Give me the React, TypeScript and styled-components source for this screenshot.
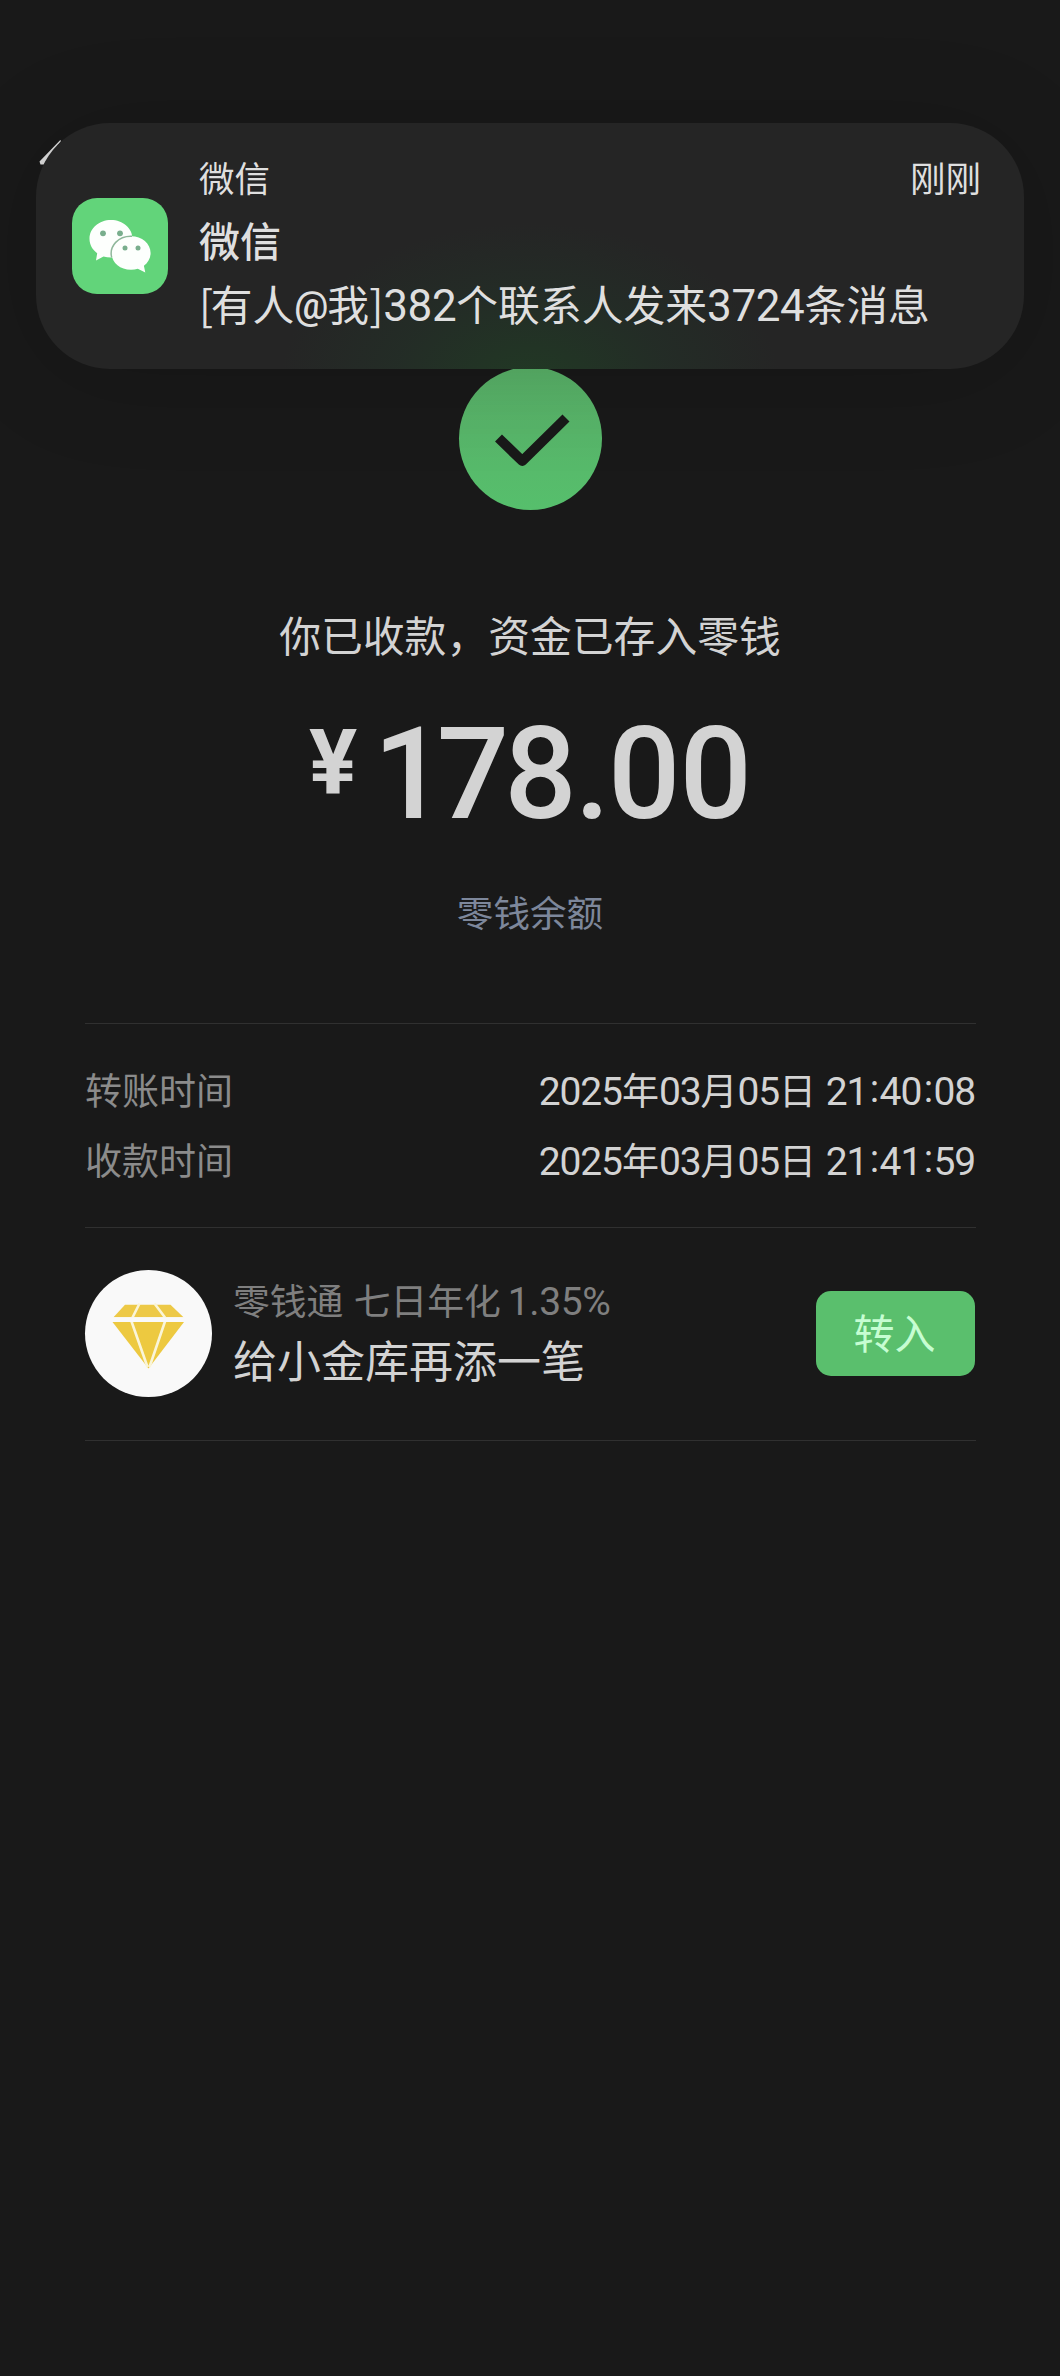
import React from "react";
import styled, { createGlobalStyle } from "styled-components";

const GlobalStyle = createGlobalStyle`
  * { box-sizing: border-box; }
  body { margin: 0; background: #191919; }
`;

const Screen = styled.div`
  position: relative;
  width: 1060px;
  height: 2376px;
  overflow: hidden;
  display: flex;
  flex-direction: column;
  background: #191919;
  color: #d3d3d3;
  font-family: "Noto Sans CJK SC", "Liberation Sans", sans-serif;
`;

const Num = styled.span<{ $size: number; $spacing?: number; $before?: number }>`
  margin-left: ${(p) => p.$before ?? 0}px;
  font-family: Roboto, "Noto Sans CJK SC", sans-serif;
  font-size: ${(p) => p.$size}px;
  letter-spacing: ${(p) => p.$spacing ?? 0}px;
  line-height: 1;
`;

const Colon = styled.span`
  padding: 0 1.5px 0 2.5px;
  vertical-align: 3px;
`;

/* Notification banner floating over the page */
const Banner = styled.section`
  position: absolute;
  top: 123px;
  left: 36px;
  width: 988px;
  height: 246px;
  padding: 0 43px 0 36px;
  display: flex;
  align-items: flex-start;
  gap: 31px;
  border-radius: 74px;
  background:
    radial-gradient(ellipse 250px 160px at 494px 260px, rgba(32, 62, 36, 0.8), rgba(33, 55, 40, 0.4) 55%, rgba(37, 37, 37, 0) 100%),
    #252525;
  box-shadow: 0 8px 100px rgba(0, 0, 0, 0.16);
`;

const AppIcon = styled.div`
  flex: none;
  width: 96px;
  height: 96px;
  margin-top: 75px;
  border-radius: 25px;
  background: #62d47a;
`;

const BannerText = styled.div`
  flex: 1;
  display: flex;
  flex-direction: column;
  padding-top: 30px;
  color: #dfdfdf;
`;

const BannerMeta = styled.div`
  display: flex;
  justify-content: space-between;
  font-size: 35.5px;
  line-height: 48px;
`;

const BannerTitle = styled.div`
  margin-top: 8px;
  font-size: 41px;
  font-weight: 500;
  line-height: 60px;
`;

const BannerBody = styled.div`
  margin-top: 4px;
  font-size: 41.8px;
  line-height: 60px;
  white-space: nowrap;
`;

const Bracket = styled.span`
  letter-spacing: -2.5px;
`;

const At = styled.span`
  font-family: Roboto, sans-serif;
  font-size: 38px;
  font-weight: 500;
  line-height: 1;
  letter-spacing: -1px;
  vertical-align: 2px;
`;

const NavBar = styled.header`
  height: 367px;
  padding: 138px 0 0 39px;
`;

const Result = styled.main`
  display: flex;
  flex-direction: column;
  align-items: center;
`;

const Badge = styled.div`
  width: 143px;
  height: 143px;
  border-radius: 50%;
  background: linear-gradient(#5ab369, #58b66a 45%, #56bf6c);
`;

const Headline = styled.h1`
  margin: 94px 0 0;
  font-size: 41.8px;
  font-weight: 400;
  line-height: 60px;
`;

const Amount = styled.div`
  display: flex;
  align-items: flex-start;
  gap: 16px;
  margin: 47px 0 0;
  font-family: Roboto, sans-serif;
  font-weight: 500;
`;

const Currency = styled.span`
  margin-top: 8px;
  font-size: 90px;
  font-weight: 700;
  line-height: 90px;
`;

const Figure = styled.span`
  font-size: 127.5px;
  line-height: 128px;
  letter-spacing: -1px;
`;

const Kern = styled.span<{ $by: number }>`
  letter-spacing: ${(p) => p.$by}px;
`;

const BalanceLink = styled.a`
  margin-top: 47px;
  font-size: 36.6px;
  line-height: 52px;
  color: #7d879b;
`;

const Details = styled.dl`
  margin: 85px 84px 0 85px;
  padding: 30px 0 33px;
  border-top: 1px solid #303030;
  border-bottom: 1px solid #303030;
  font-size: 37px;
`;

const DetailRow = styled.div`
  display: flex;
  justify-content: space-between;
  height: 70px;
  line-height: 70px;
`;

const Label = styled.dt`
  color: #8b8b8b;
`;

const Value = styled.dd`
  margin: 0 1px 0 0;
`;

const Promo = styled.section`
  display: flex;
  align-items: center;
  height: 213px;
  margin: 0 84px 0 85px;
  padding-bottom: 1px;
  border-bottom: 1px solid #303030;
`;

const PromoIcon = styled.div`
  width: 127px;
  height: 127px;
  border-radius: 50%;
  background: #f9f9f9;
`;

const PromoText = styled.div`
  flex: 1;
  margin: 0 0 4px 21px;
`;

const PromoRate = styled.div`
  font-size: 36.8px;
  line-height: 50px;
  word-spacing: 2px;
  color: #7f7f7f;
`;

const PromoTitle = styled.div`
  margin-top: 5px;
  font-size: 44px;
  line-height: 60px;
`;

const TransferButton = styled.button`
  width: 159px;
  height: 85px;
  margin-right: 1px;
  padding: 0 2px 0 0;
  border: 0;
  border-radius: 15px;
  background: #5abf6d;
  color: #c6fdd2;
  font: 400 41px/77px "Noto Sans CJK SC", sans-serif;
`;

const ButtonLabel = styled.span`
  display: block;
  height: 81px;
`;

const Glyph = styled.svg`
  display: block;
`;

const WeChatLogo = () => (
  <Glyph width="96" height="96" viewBox="0 0 96 96">
    <path
      d="M39 22c-11.9 0-21.500 8.200-21.500 18.700 0 5.900 3 11 7.700 14.500L24 62.500l7.500-3.900c2.400.7 4.900 1 7.500 1 11.900 0 21.500-8.400 21.500-18.900S50.900 22 39 22z"
      fill="#fdfffd"
    />
    <path
      d="M59 38.300c-11 0-19.500 7.400-19.500 16.700S48 71.800 59 71.800c2.500 0 4.700-.3 6.800-1l7.500 3.600-1.400-6.600c4.100-3.100 6.700-7.600 6.700-12.800 0-9.300-8.600-16.700-19.600-16.700z"
      fill="#fdfffd"
    />
    <path d="M39.700 59.500C36.800 48.200 46.500 37.600 60 38.200" fill="none" stroke="#8fb79b" strokeWidth="1.500" />
    <circle cx="31" cy="35.300" r="2.900" fill="#79ae8d" />
    <circle cx="48" cy="35.300" r="2.900" fill="#79ae8d" />
    <circle cx="53" cy="50" r="2.500" fill="#79ae8d" />
    <circle cx="66" cy="50" r="2.500" fill="#79ae8d" />
  </Glyph>
);

const Check = () => (
  <Glyph width="143" height="143" viewBox="0 0 143 143">
    <path d="M39.500 71 63.300 94 107 51" fill="none" stroke="#191919" strokeWidth="10" strokeLinejoin="round" />
  </Glyph>
);

const Diamond = () => (
  <Glyph width="127" height="127" viewBox="0 0 127 127">
    <path d="M40 34.800H85.500L98.500 47.300H28.500z" fill="#edc947" />
    <path d="M27.500 52H99L63.500 98.500z" fill="#edc940" />
    <path d="M54.500 33.500 47.500 47.500M69.500 33.500 80 47.500M46 50 62.500 97M80.500 50 64.500 97" fill="none" stroke="#faf5d8" strokeWidth="2.600" />
    <path d="M27 49.700H99.500" stroke="#f9f9f9" strokeWidth="4.700" />
  </Glyph>
);

const BackArrow = () => (
  <Glyph width="24" height="30" viewBox="0 0 24 30">
    <path d="M.5 23.500 1.500 26.500H5L9 20 22 3 21.300 2z" fill="#dcdcdc" />
  </Glyph>
);

const transfers = [
  { label: "转账时间", date: ["2025", "03", "05"], time: "21:40:08" },
  { label: "收款时间", date: ["2025", "03", "05"], time: "21:41:59" },
];

const DateNum = ({ children, before }: { children: React.ReactNode; before?: number }) => (
  <Num $size={39} $spacing={-1.15} $before={before}>{children}</Num>
);

const Clock = ({ time }: { time: string }) => (
  <DateNum before={1.5}>
    {time.split(":").map((part, i) => (
      <React.Fragment key={i}>
        {i > 0 && <Colon>:</Colon>}
        {part}
      </React.Fragment>
    ))}
  </DateNum>
);

export default function App() {
  return (
    <Screen>
      <GlobalStyle />
      <NavBar>
        <BackArrow />
      </NavBar>
      <Result>
        <Badge>
          <Check />
        </Badge>
        <Headline>你已收款，资金已存入零钱</Headline>
        <Amount>
          <Currency>¥</Currency>
          <Figure>
            <Kern $by={-9}>1</Kern>
            <Kern $by={-5}>7</Kern>
            <Kern $by={-2}>8.</Kern>00
          </Figure>
        </Amount>
        <BalanceLink>零钱余额</BalanceLink>
      </Result>
      <Details>
        {transfers.map(({ label, date, time }) => (
          <DetailRow key={label}>
            <Label>{label}</Label>
            <Value>
              <DateNum>{date[0]}</DateNum>年<DateNum>{date[1]}</DateNum>月<DateNum>{date[2]}</DateNum>日{" "}
              <Clock time={time} />
            </Value>
          </DetailRow>
        ))}
      </Details>
      <Promo>
        <PromoIcon>
          <Diamond />
        </PromoIcon>
        <PromoText>
          <PromoRate>
            零钱通 七日年化<Num $size={39} $spacing={-0.4} $before={7}>1.35%</Num>
          </PromoRate>
          <PromoTitle>给小金库再添一笔</PromoTitle>
        </PromoText>
        <TransferButton>
          <ButtonLabel>转入</ButtonLabel>
        </TransferButton>
      </Promo>
      <Banner>
        <AppIcon>
          <WeChatLogo />
        </AppIcon>
        <BannerText>
          <BannerMeta>
            <span>微信</span>
            <span>刚刚</span>
          </BannerMeta>
          <BannerTitle>微信</BannerTitle>
          <BannerBody>
            <Bracket>[</Bracket>有人<At>@</At>我]<Num $size={44} $spacing={-0.4}>382</Num>
            个联系人发来<Num $size={44} $spacing={-0.4}>3724</Num>条消息
          </BannerBody>
        </BannerText>
      </Banner>
    </Screen>
  );
}
